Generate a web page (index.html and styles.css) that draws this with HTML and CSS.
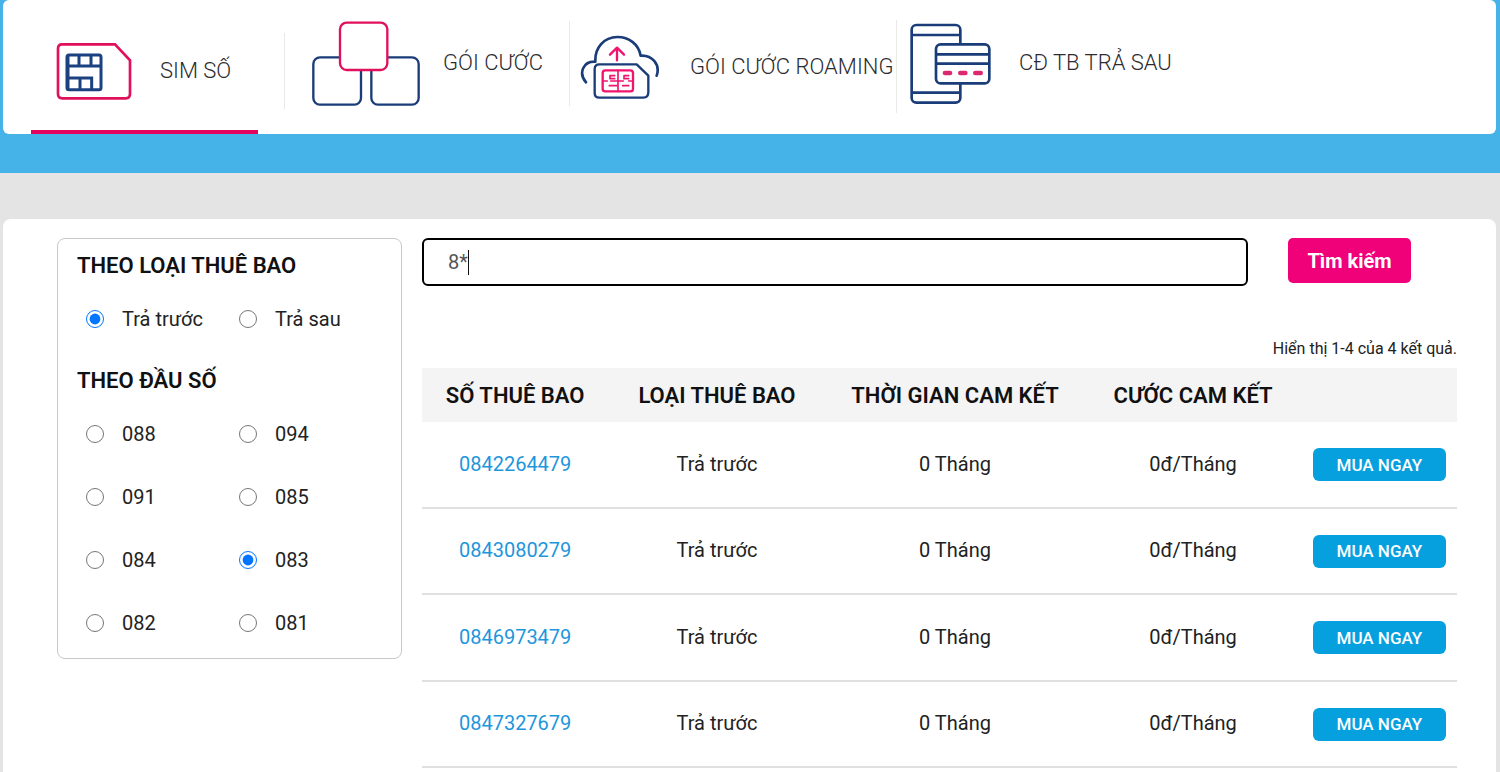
FILE: index.html
```html
<!DOCTYPE html>
<html lang="vi">
<head>
<meta charset="utf-8">
<meta name="viewport" content="width=device-width, initial-scale=1">
<title>Sim số</title>
<link rel="stylesheet" href="styles.css">
</head>
<body>
<header class="top">
  <nav class="tabs">
    <a class="tab tab-sim" href="#sim" aria-current="page">
      <svg width="76" height="57" viewBox="167 127 228 171" fill="none" aria-hidden="true">
        <path d="M185 131H344L389 179V280Q389 293 376 293H186Q173 293 173 280V144Q173 131 185 131Z" stroke="#e0105c" stroke-width="8"/>
        <g stroke="#1c4180" stroke-width="9">
          <rect x="200" y="163" width="102" height="104" rx="6"/>
          <path d="M200 196H302M236 163V196M272 163V196M200 232H274V267M239 232V267M203 163V267"/>
        </g>
      </svg>
      <span>SIM SỐ</span>
    </a>
    <span class="divider divider-sim"></span>
    <a class="tab tab-pack" href="#goi-cuoc">
      <svg width="108" height="85" viewBox="98 63 324 255" fill="none" stroke-width="7" aria-hidden="true">
        <rect x="102" y="172" width="143" height="142" rx="20" stroke="#1a3c78"/>
        <rect x="276" y="172" width="142" height="142" rx="20" stroke="#1a3c78"/>
        <rect x="182" y="68" width="142" height="142" rx="20" fill="#fff" stroke="#e0105c"/>
      </svg>
      <span>GÓI CƯỚC</span>
    </a>
    <span class="divider divider-pack"></span>
    <a class="tab tab-roaming" href="#roaming">
      <svg width="80" height="64" viewBox="60 108 240 192" fill="none" stroke-linecap="round" stroke-linejoin="round" aria-hidden="true">
        <g stroke="#1a3c78" stroke-width="8">
          <path d="M78 250C54 222 70 186 106 188C104 146 132 114 172 114C208 114 236 136 242 170C276 168 302 196 290 230"/>
          <path stroke-width="7" d="M118 196H230L265 230V280Q265 296 250 296H118Q104 296 104 282V210Q104 196 118 196Z"/>
        </g>
        <g stroke="#f0146e" stroke-width="7">
          <path d="M171 184V147M150 167L171 146L192 167"/>
          <rect x="128" y="214" width="91" height="63" rx="8"/>
          <path stroke-width="5" d="M174 214V277M130 246H142M164 230H150V239H164M152 246H174M148 260H174M206 230H192V239H206M206 246H218M174 246H190M188 260H206"/>
        </g>
      </svg>
      <span>GÓI CƯỚC ROAMING</span>
    </a>
    <span class="divider divider-roaming"></span>
    <a class="tab tab-postpaid" href="#tra-sau">
      <svg width="81" height="81" viewBox="62 66 243 243" fill="none" stroke="#1a3c78" stroke-width="8" aria-hidden="true">
        <rect x="67" y="72" width="146" height="233" rx="14"/>
        <path d="M67 102H213M67 275H213"/>
        <rect x="140" y="130" width="160" height="117" rx="14" fill="#fff"/>
        <path d="M140 160H300M140 188H300"/>
        <path stroke="#dc2870" stroke-width="14" stroke-linecap="round" d="M167 216H182M213 216H228M258 216H274"/>
      </svg>
      <span>CĐ TB TRẢ SAU</span>
    </a>
  </nav>
</header>

<main class="panel">
  <form class="filters">
    <fieldset class="group">
      <legend>THEO LOẠI THUÊ BAO</legend>
      <div class="options">
        <label><input type="radio" name="type" checked>Trả trước</label>
        <label><input type="radio" name="type">Trả sau</label>
      </div>
    </fieldset>
    <fieldset class="group">
      <legend>THEO ĐẦU SỐ</legend>
      <div class="options">
        <label><input type="radio" name="prefix">088</label>
        <label><input type="radio" name="prefix">094</label>
        <label><input type="radio" name="prefix">091</label>
        <label><input type="radio" name="prefix">085</label>
        <label><input type="radio" name="prefix">084</label>
        <label><input type="radio" name="prefix" checked>083</label>
        <label><input type="radio" name="prefix">082</label>
        <label><input type="radio" name="prefix">081</label>
      </div>
    </fieldset>
  </form>

  <section class="results">
    <form class="search">
      <div class="field">
        <input type="text" value="8*" aria-label="Số thuê bao">
        <span class="caret"></span>
      </div>
      <button type="button">Tìm kiếm</button>
    </form>
    <p class="summary">Hiển thị 1-4 của 4 kết quả.</p>
    <table class="numbers">
      <colgroup><col class="c-number"><col class="c-type"><col class="c-term"><col class="c-fee"><col class="c-buy"></colgroup>
      <thead>
        <tr><th>SỐ THUÊ BAO</th><th>LOẠI THUÊ BAO</th><th>THỜI GIAN CAM KẾT</th><th>CƯỚC CAM KẾT</th><th></th></tr>
      </thead>
      <tbody>
        <tr><td><a href="#0842264479">0842264479</a></td><td>Trả trước</td><td>0 Tháng</td><td>0đ/Tháng</td><td class="buy"><button type="button">MUA NGAY</button></td></tr>
        <tr><td><a href="#0843080279">0843080279</a></td><td>Trả trước</td><td>0 Tháng</td><td>0đ/Tháng</td><td class="buy"><button type="button">MUA NGAY</button></td></tr>
        <tr><td><a href="#0846973479">0846973479</a></td><td>Trả trước</td><td>0 Tháng</td><td>0đ/Tháng</td><td class="buy"><button type="button">MUA NGAY</button></td></tr>
        <tr><td><a href="#0847327679">0847327679</a></td><td>Trả trước</td><td>0 Tháng</td><td>0đ/Tháng</td><td class="buy"><button type="button">MUA NGAY</button></td></tr>
      </tbody>
    </table>
  </section>
</main>
</body>
</html>
```
FILE: styles.css
```css
* { box-sizing: border-box; }

body {
  margin: 0;
  min-height: 100vh;
  display: flex;
  flex-direction: column;
  background: #e4e4e4;
  color: #222;
  font: 20px/24px Roboto, "Noto Sans", sans-serif;
}

a { text-decoration: none; }
button, input { font-family: inherit; }

.top {
  background: #45b3e7;
  padding: 0 4px 39px 3px;
}

.tabs {
  display: flex;
  height: 134px;
  padding-left: 28px;
  background: #fff;
  border-radius: 6px;
}

.tab {
  display: flex;
  align-items: center;
  flex: none;
  color: #2c2c30;
  font-size: 22px;
  font-weight: 300;
  white-space: nowrap;
}
.tab svg { flex: none; }

.tab-sim {
  width: 227px;
  gap: 28px;
  padding: 12px 0 0 25px;
  border-bottom: 4px solid #e3055d;
}
.tab-pack { width: 284px; gap: 23px; padding: 0 0 8px 27px; }
.tab-roaming { width: 326px; gap: 30px; padding-left: 10px; }
.tab-postpaid { gap: 28px; padding: 0 0 8px 13px; }

.divider { flex: none; width: 1px; background: #e9e9e9; }
.divider-sim { height: 76px; margin: 33px 0 0 26px; }
.divider-pack { height: 85px; margin-top: 21px; }
.divider-roaming { height: 93px; margin-top: 20px; }

.panel {
  flex: 1;
  display: grid;
  grid-template-columns: 345px 1fr;
  align-items: start;
  gap: 20px;
  margin: 46px 4px 0 3px;
  padding: 19px 39px 0 54px;
  background: #fff;
  border-radius: 8px 8px 0 0;
}

.filters {
  padding: 13px 19px 23px;
  border: 1px solid #c8c8c8;
  border-radius: 8px;
}
.group { margin: 0; padding: 0; border: 0; min-width: 0; }
.group + .group { margin-top: 36px; }
.group legend {
  padding: 0;
  color: #111;
  font-size: 22px;
  font-weight: 600;
  line-height: 28px;
}
.options {
  display: grid;
  grid-template-columns: 153px 1fr;
  row-gap: 39px;
  padding: 27px 0 0 9px;
}
.options label { display: flex; align-items: center; gap: 18px; }
.options input {
  width: 18px;
  height: 18px;
  margin: 0;
  accent-color: #0075ff;
}

.search {
  display: flex;
  align-items: flex-start;
  gap: 40px;
  padding-right: 46px;
}
.field { position: relative; flex: 1; }
.field input {
  display: block;
  width: 100%;
  height: 48px;
  padding: 0 24px;
  border: 2px solid #000;
  border-radius: 6px;
  background: #fff;
  color: #555;
  font-size: 20px;
}
.caret {
  position: absolute;
  left: 46px;
  top: 12px;
  width: 1px;
  height: 25px;
  background: #111;
}
.search button {
  width: 123px;
  height: 45px;
  padding: 0;
  border: 0;
  border-radius: 5px;
  background: #f00079;
  color: #fff;
  font-size: 20px;
  font-weight: 700;
}

.summary {
  margin: 51px 0 7px;
  font-size: 16px;
  text-align: right;
}

.numbers {
  width: 100%;
  table-layout: fixed;
  border-collapse: separate;
  border-spacing: 0;
  text-align: center;
}
.c-number { width: 18%; }
.c-type { width: 21%; }
.c-term { width: 25%; }
.c-fee { width: 21%; }
.c-buy { width: 15%; }
.numbers th {
  height: 54px;
  padding: 2px 0 0;
  background: #f4f4f4;
  color: #111;
  font-size: 22px;
  font-weight: 600;
  white-space: nowrap;
}
.numbers td {
  height: 87px;
  padding: 0 0 2px;
  border-bottom: 2px solid #e0e0e0;
}
.numbers .buy { padding: 0; }
.numbers a { color: #1e96dc; }
.numbers button {
  width: 133px;
  height: 33px;
  padding: 0;
  border: 0;
  border-radius: 6px;
  background: #06a0df;
  color: #fff;
  font-size: 17px;
  font-weight: 500;
}
.numbers tr:nth-child(even) td { height: 86px; }
```
